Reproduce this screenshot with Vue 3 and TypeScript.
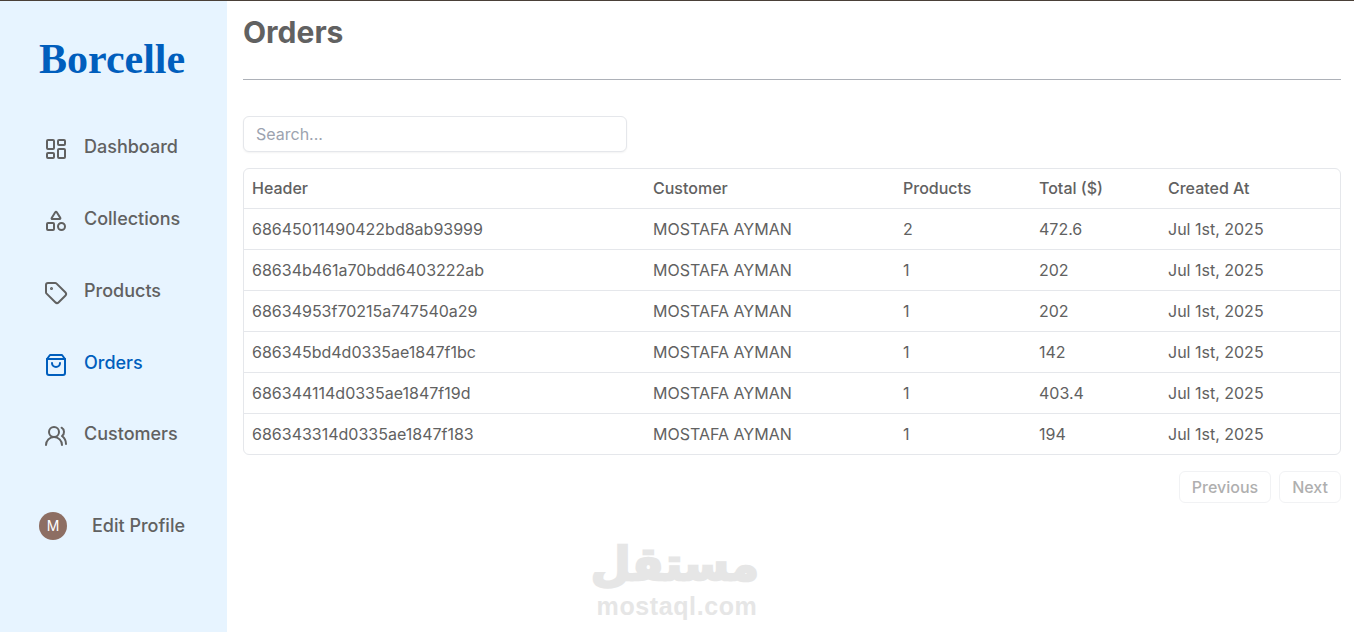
<script setup lang="ts">
interface NavItem { label: string; icon: string; active?: boolean }
const nav: NavItem[] = [
  { label: 'Dashboard', icon: 'dashboard' },
  { label: 'Collections', icon: 'shapes' },
  { label: 'Products', icon: 'tag' },
  { label: 'Orders', icon: 'bag', active: true },
  { label: 'Customers', icon: 'users' },
]
const columns = ['Header', 'Customer', 'Products', 'Total ($)', 'Created At']
const rows = [
  ['68645011490422bd8ab93999', 'MOSTAFA AYMAN', '2', '472.6', 'Jul 1st, 2025'],
  ['68634b461a70bdd6403222ab', 'MOSTAFA AYMAN', '1', '202', 'Jul 1st, 2025'],
  ['68634953f70215a747540a29', 'MOSTAFA AYMAN', '1', '202', 'Jul 1st, 2025'],
  ['686345bd4d0335ae1847f1bc', 'MOSTAFA AYMAN', '1', '142', 'Jul 1st, 2025'],
  ['686344114d0335ae1847f19d', 'MOSTAFA AYMAN', '1', '403.4', 'Jul 1st, 2025'],
  ['686343314d0335ae1847f183', 'MOSTAFA AYMAN', '1', '194', 'Jul 1st, 2025'],
]
</script>

<template>
  <div class="page">
    <aside class="sidebar">
      <div class="logo">Borcelle</div>
      <nav class="nav">
        <a v-for="item in nav" :key="item.label" class="nav-item" :class="{ active: item.active }">
          <svg class="icon" viewBox="0 0 24 24" fill="none" stroke="currentColor" stroke-width="2" stroke-linecap="round" stroke-linejoin="round">
            <template v-if="item.icon === 'dashboard'">
              <rect width="7" height="9" x="3" y="3" rx="1" />
              <rect width="7" height="5" x="14" y="3" rx="1" />
              <rect width="7" height="9" x="14" y="12" rx="1" />
              <rect width="7" height="5" x="3" y="16" rx="1" />
            </template>
            <template v-else-if="item.icon === 'shapes'">
              <path d="M8.3 10a.7.7 0 0 1-.626-1.079L11.4 3a.7.7 0 0 1 1.198-.043L16.3 8.9a.7.7 0 0 1-.572 1.1Z" />
              <rect x="3" y="14" width="7" height="7" rx="1" />
              <circle cx="17.5" cy="17.5" r="3.5" />
            </template>
            <template v-else-if="item.icon === 'tag'">
              <path d="M12.586 2.586A2 2 0 0 0 11.172 2H4a2 2 0 0 0-2 2v7.172a2 2 0 0 0 .586 1.414l8.704 8.704a2.426 2.426 0 0 0 3.42 0l6.58-6.58a2.426 2.426 0 0 0 0-3.42z" />
              <circle cx="7.5" cy="7.5" r=".5" fill="currentColor" />
            </template>
            <template v-else-if="item.icon === 'bag'">
              <path d="M6 2 3 6v14a2 2 0 0 0 2 2h14a2 2 0 0 0 2-2V6l-3-4Z" />
              <path d="M3 6h18" />
              <path d="M16 10a4 4 0 0 1-8 0" />
            </template>
            <template v-else>
              <path d="M18 21a8 8 0 0 0-16 0" />
              <circle cx="10" cy="8" r="5" />
              <path d="M22 20c0-3.37-2-6.5-4-8a5 5 0 0 0-.45-8.3" />
            </template>
          </svg>
          <span>{{ item.label }}</span>
        </a>
      </nav>
      <div class="profile">
        <span class="avatar">M</span>
        <span>Edit Profile</span>
      </div>
    </aside>

    <main class="main">
      <h1 class="title">Orders</h1>
      <hr class="rule" />
      <input class="search" type="text" placeholder="Search..." />
      <div class="table-wrap">
        <table class="table">
          <thead>
            <tr>
              <th v-for="(column, i) in columns" :key="column" :class="`col-${i}`">{{ column }}</th>
            </tr>
          </thead>
          <tbody>
            <tr v-for="row in rows" :key="row[0]">
              <td v-for="(cell, i) in row" :key="i">{{ cell }}</td>
            </tr>
          </tbody>
        </table>
      </div>
      <div class="pager">
        <button class="pager-btn" disabled>Previous</button>
        <button class="pager-btn" disabled>Next</button>
      </div>
    </main>

    <div class="watermark">
      <div class="wm-ar" dir="rtl" lang="ar">مستقل</div>
      <div class="wm-en">mostaql.com</div>
    </div>
  </div>
</template>

<style>
html, body { margin: 0; background: #fff; overflow: hidden; }
</style>

<style scoped>
.page {
  position: relative;
  display: flex;
  height: 631px;
  border-top: 1px solid #4a4038;
  overflow: hidden;
  font-family: Inter, "Liberation Sans", sans-serif;
  font-size: 16px;
  color: #616161;
  background: #fff;
}
.sidebar {
  width: 227px;
  flex: none;
  box-sizing: border-box;
  padding: 33px 0 0 39px;
  background: #e7f4ff;
}
.logo {
  height: 50px;
  font-family: "Liberation Serif", serif;
  font-weight: 700;
  font-size: 42px;
  line-height: 50px;
  color: #005ebd;
  white-space: nowrap;
}
.nav {
  display: flex;
  flex-direction: column;
  gap: 45px;
  margin-top: 51.2px;
  padding-left: 5px;
}
.nav-item {
  display: flex;
  align-items: flex-start;
  gap: 16px;
  height: 26.8px;
  font-size: 18px;
  font-weight: 500;
  line-height: 24px;
}
.nav-item.active { color: #005ebd; }
.icon { width: 24px; height: 24px; margin-top: 2px; flex: none; }
.profile {
  display: flex;
  align-items: center;
  gap: 25px;
  margin-top: 62.8px;
  font-size: 18px;
  font-weight: 500;
  line-height: 28px;
}
.avatar {
  width: 28px;
  height: 28px;
  border-radius: 50%;
  background: #8d6e63;
  color: #fff;
  font-size: 14px;
  font-weight: 400;
  text-align: center;
}
.main {
  flex: 1;
  min-width: 0;
  padding: 0 13px 0 16px;
}
.title {
  margin: 12px 0 0;
  font-size: 30px;
  line-height: 38px;
  font-weight: 700;
}
.rule {
  margin: 28px 0 0;
  border: 0;
  border-top: 1px solid #adb1b8;
}
.search {
  display: block;
  box-sizing: border-box;
  width: 384px;
  height: 36px;
  margin-top: 36px;
  padding: 0 12px;
  border: 1px solid #e5e7eb;
  border-radius: 6px;
  box-shadow: 0 1px 2px rgba(0, 0, 0, 0.05);
  font: inherit;
  outline: none;
}
.search::placeholder { color: #9ca3af; }
.table-wrap {
  margin-top: 16px;
  border: 1px solid #e5e7eb;
  border-radius: 6px;
  overflow: hidden;
}
.table {
  width: 100%;
  table-layout: fixed;
  border-collapse: collapse;
}
th, td {
  height: 41px;
  padding: 0 8px;
  box-sizing: border-box;
  text-align: left;
  font-weight: 400;
}
th { font-weight: 500; height: 39px; }
tr { border-bottom: 1px solid #e5e7eb; }
tbody tr:last-child { border-bottom: 0; }
.col-0 { width: 401px; }
.col-1 { width: 250px; }
.col-2 { width: 136px; }
.col-3 { width: 129px; }
.pager {
  display: flex;
  justify-content: flex-end;
  gap: 8px;
  margin-top: 16px;
}
.pager-btn {
  height: 32px;
  padding: 0 12px;
  border: 1px solid #e5e7eb;
  border-radius: 6px;
  background: #fff;
  color: #616161;
  font: inherit;
  font-weight: 500;
  opacity: 0.5;
}
.watermark {
  position: absolute;
  left: 595px;
  top: 535px;
  width: 164px;
  text-align: center;
  color: #e6e6e6;
  font-weight: 700;
}
.wm-ar {
  font-family: "DejaVu Sans", sans-serif;
  font-size: 46px;
  line-height: 56px;
  white-space: nowrap;
  -webkit-text-stroke: 2.5px #e6e6e6;
}
.wm-en {
  font-family: "Liberation Sans", sans-serif;
  font-size: 25px;
  line-height: 28px;
  letter-spacing: 0.6px;
  white-space: nowrap;
}
</style>
